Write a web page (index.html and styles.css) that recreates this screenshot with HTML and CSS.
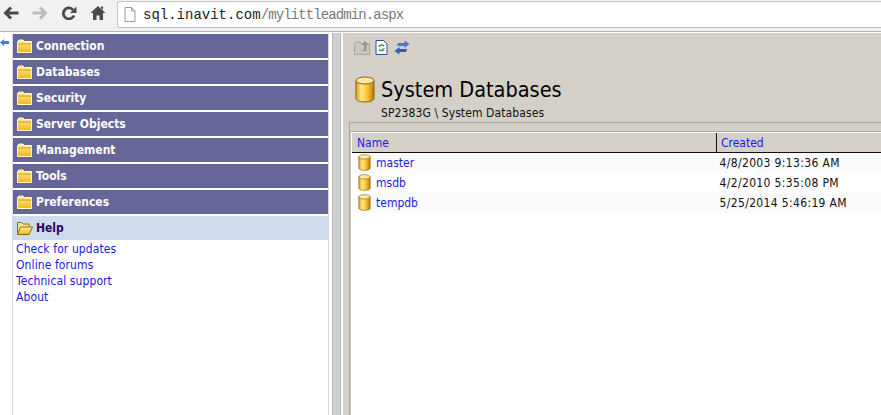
FILE: index.html
```html
<!DOCTYPE html>
<html lang="en">
<head>
    <meta charset="UTF-8">
    <title>myLittleAdmin</title>
    <link rel="stylesheet" href="styles.css">
</head>
<body>
    <svg width="0" height="0" class="defs">
        <defs>
            <linearGradient id="dbfill" x1="0" x2="1" y1="0" y2="0">
                <stop offset="0" stop-color="#e0a010"/>
                <stop offset="0.3" stop-color="#ffe88a"/>
                <stop offset="0.65" stop-color="#f8c030"/>
                <stop offset="1" stop-color="#b87a08"/>
            </linearGradient>
            <linearGradient id="folderfill" x1="0" x2="0" y1="0" y2="1">
                <stop offset="0" stop-color="#fff3a0"/>
                <stop offset="1" stop-color="#f4b414"/>
            </linearGradient>
            <symbol id="db" viewBox="0 0 20 27">
                <path d="M1 4.500v18c0 2 4 3.500 9 3.500s9-1.500 9-3.500v-18z" fill="url(#dbfill)" stroke="#8a6414"/>
                <ellipse cx="10" cy="4.500" rx="9" ry="3.500" fill="#ffe9a0" stroke="#8a6414"/>
            </symbol>
            <symbol id="folder" viewBox="0 0 15 14">
                <path d="M.5 2.500L2 1h4l1.500 1.500h7v11H.5z" fill="url(#folderfill)" stroke="#fff8d0"/>
                <path d="M1 5h13" stroke="#c89a10"/>
            </symbol>
            <symbol id="folderopen" viewBox="0 0 17 14">
                <path d="M1.500 12.500v-11h4l1.500 1.500h6v2.500" fill="#ffe68a" stroke="#8a6a14"/>
                <path d="M1.500 13.500h11.500l3.500-7.500H4.500z" fill="url(#folderfill)" stroke="#8a6a14"/>
            </symbol>
        </defs>
    </svg>

    <header class="toolbar">
        <div class="nav">
            <svg class="nav-icon" viewBox="0 0 16 14"><path d="M15.500 7H3.500M8 1.500L2.500 7 8 12.500" fill="none" stroke="#4a4a4a" stroke-width="3"/></svg>
            <svg class="nav-icon" viewBox="0 0 16 14"><path d="M.5 7h12M8 1.500L13.500 7 8 12.500" fill="none" stroke="#bcbcbc" stroke-width="3"/></svg>
            <svg class="nav-icon" viewBox="0 0 16 14"><path d="M12.200 4A5.500 5.500 0 1 0 13 9.500" fill="none" stroke="#4a4a4a" stroke-width="2.800"/><path d="M15.500 .5v6.500H9z" fill="#4a4a4a"/></svg>
            <svg class="nav-icon" viewBox="0 0 16 14"><path d="M8 0L.5 7H3v7h3.500V9.500h3V14H13V7h2.500zM11 .5h2v3.500l-2-2z" fill="#4a4a4a"/></svg>
        </div>
        <div class="address">
            <svg class="page-icon" viewBox="0 0 12 15"><path d="M1 .5h6.500L11 4v10.500H1z" fill="#fff" stroke="#999"/><path d="M7.500.5V4H11" fill="none" stroke="#999"/></svg>
            <span class="host">sql.inavit.com</span><span class="path">/mylittleadmin.aspx</span>
        </div>
    </header>

    <div class="app">
        <aside class="sidebar">
            <svg class="collapse" viewBox="0 0 9 7"><path d="M0 3.500L4 0v2h5v3H4v2z" fill="#3f7fd8"/></svg>
            <nav class="menu">
                <div class="menu-item"><svg class="folder"><use href="#folder"/></svg>Connection</div>
                <div class="menu-item"><svg class="folder"><use href="#folder"/></svg>Databases</div>
                <div class="menu-item"><svg class="folder"><use href="#folder"/></svg>Security</div>
                <div class="menu-item"><svg class="folder"><use href="#folder"/></svg>Server Objects</div>
                <div class="menu-item"><svg class="folder"><use href="#folder"/></svg>Management</div>
                <div class="menu-item"><svg class="folder"><use href="#folder"/></svg>Tools</div>
                <div class="menu-item"><svg class="folder"><use href="#folder"/></svg>Preferences</div>
                <div class="menu-item active"><svg class="folder-open"><use href="#folderopen"/></svg>Help</div>
                <ul class="submenu">
                    <li><a href="#">Check for updates</a></li>
                    <li><a href="#">Online forums</a></li>
                    <li><a href="#">Technical support</a></li>
                    <li><a href="#">About</a></li>
                </ul>
            </nav>
        </aside>
        <div class="splitter"><div class="splitter-bar"></div></div>
        <main class="content">
            <div class="head">
                <div class="tools">
                    <svg class="tool tool-up" viewBox="0 0 16 15"><path d="M.5 3.500L2 2h4l1 1.500h8.500v11H.5z" fill="#c8c5be" stroke="#a8a6a0"/><path d="M10.500 1l4 4h-2v6H7c2 0 3-2 3-3V5H7.500z" fill="#98968f"/></svg>
                    <svg class="tool tool-page" viewBox="0 0 13 15"><path d="M1 .5h7.500L12 4v10.500H1z" fill="#fff" stroke="#30508c"/><path d="M9 6A3 3 0 0 0 3.800 7M4 9.500A3 3 0 0 0 9.200 8.500" fill="none" stroke="#2e9a2e" stroke-width="1.400"/></svg>
                    <svg class="tool tool-swap" viewBox="0 0 16 15"><path d="M4 3h6.500V.5L15.500 4l-5 4V6H3z" fill="#3f78e0"/><path d="M12 12H5.500v2.500L.5 11l5-4v2H13z" fill="#2f5cc0"/></svg>
                </div>
                <div class="title-row">
                    <svg class="title-icon"><use href="#db"/></svg>
                    <h1>System Databases</h1>
                </div>
                <div class="crumb">SP2383G \ System Databases</div>
            </div>
            <div class="pane">
                <div class="table-wrap">
                    <table class="grid">
                        <thead>
                            <tr><th class="col-name"><a href="#">Name</a></th><th class="col-created"><a href="#">Created</a></th></tr>
                        </thead>
                        <tbody>
                            <tr class="odd"><td><span class="db-cell"><svg class="db-icon"><use href="#db"/></svg><a href="#">master</a></span></td><td class="date">4/8/2003 9:13:36 AM</td></tr>
                            <tr><td><span class="db-cell"><svg class="db-icon"><use href="#db"/></svg><a href="#">msdb</a></span></td><td class="date">4/2/2010 5:35:08 PM</td></tr>
                            <tr class="odd"><td><span class="db-cell"><svg class="db-icon"><use href="#db"/></svg><a href="#">tempdb</a></span></td><td class="date">5/25/2014 5:46:19 AM</td></tr>
                        </tbody>
                    </table>
                </div>
            </div>
        </main>
    </div>
</body>
</html>
```

FILE: styles.css
```css
html, body {
    margin: 0;
    height: 100%;
    overflow: hidden;
}
body {
    font-family: "DejaVu Sans Condensed", "DejaVu Sans", sans-serif;
    font-size: 12px;
    background-color: #fff;
    display: flex;
    flex-direction: column;
}
a {
    color: #1a1ae0;
    text-decoration: none;
}
.defs {
    position: absolute;
}

/* browser bar */
.toolbar {
    height: 31px;
    flex: none;
    display: flex;
    background-color: #f1f1f1;
    border-bottom: 1px solid #b4b4b4;
}
.nav {
    width: 117px;
    flex: none;
    display: flex;
    gap: 13px;
    padding: 6px 0 0 3px;
    box-sizing: border-box;
}
.nav-icon {
    width: 16px;
    height: 14px;
}
.address {
    flex: 1;
    height: 25px;
    margin-top: 1px;
    display: flex;
    align-items: center;
    background-color: #fff;
    border: 1px solid #c4c4c4;
    border-right: none;
    border-radius: 3px 0 0 3px;
    font-family: "Liberation Mono", monospace;
    font-size: 14px;
    padding-left: 6px;
}
.page-icon {
    width: 12px;
    height: 15px;
    margin-right: 7px;
}
.host {
    color: #222;
}
.path {
    color: #777;
    letter-spacing: -0.9px;
}

/* left menu */
.app {
    flex: 1;
    display: flex;
    min-height: 0;
}
.sidebar {
    width: 328px;
    flex: none;
    display: flex;
    padding-top: 2px;
    box-sizing: border-box;
}
.collapse {
    width: 9px;
    height: 7px;
    margin-top: 5px;
    margin-right: 3px;
    flex: none;
}
.menu {
    flex: 1;
    border-left: 1px solid #d8d8e4;
}
.menu-item {
    height: 24px;
    margin-bottom: 2px;
    display: flex;
    align-items: center;
    gap: 4px;
    padding-left: 4px;
    background-color: #666699;
    color: #fff;
    font-size: 12px;
    font-weight: bold;
}
.menu-item.active {
    background-color: #ccdcec;
    color: #330066;
}
.folder {
    width: 15px;
    height: 14px;
}
.folder-open {
    width: 17px;
    height: 14px;
    margin-left: -1px;
    margin-right: -1px;
}
.submenu {
    list-style: none;
    margin: -1px 0 0;
    padding: 0 0 0 3px;
    line-height: 16px;
    letter-spacing: 0.1px;
}

/* splitter */
.splitter {
    width: 15px;
    flex: none;
    padding-left: 3px;
    box-sizing: border-box;
    margin-top: 1px;
    border-left: 1px solid #d8d8d8;
}
.splitter-bar {
    width: 9px;
    height: 100%;
    background-color: #d0d0d0;
    border-left: 1px solid #b8b8b8;
    border-right: 1px solid #b8b8b8;
    box-sizing: border-box;
}

/* right side */
.content {
    flex: 1;
    min-width: 0;
    margin-top: 1px;
    background-color: #d4d0c8;
    display: flex;
    flex-direction: column;
}
.head {
    height: 89px;
    flex: none;
    padding-top: 7px;
    box-sizing: border-box;
}
.tools {
    display: flex;
    height: 15px;
    padding-left: 11px;
}
.tool {
    height: 15px;
}
.tool-up {
    width: 16px;
}
.tool-page {
    width: 13px;
    margin-left: 5px;
}
.tool-swap {
    width: 16px;
    margin-left: 6px;
}
.title-row {
    display: flex;
    align-items: center;
    gap: 6px;
    margin-top: 20px;
    padding-left: 12px;
    height: 28px;
}
.title-icon {
    width: 20px;
    height: 27px;
}
h1 {
    margin: 0;
    font-size: 21.5px;
    font-weight: normal;
    color: #000;
}
.crumb {
    margin-top: 3px;
    padding-left: 38px;
    letter-spacing: 0.1px;
    color: #111;
}
.pane {
    flex: 1;
    display: flex;
    min-height: 0;
    margin-left: 6px;
    padding-top: 8px;
    border-left: 1px solid #a8a6a2;
    border-top: 1px solid #a8a6a2;
}
.table-wrap {
    flex: 1;
    min-width: 0;
    background-color: #fff;
    border-top: 1px solid #a8a6a2;
    border-left: 1px solid #c8c8c8;
    padding: 1px 0 0 1px;
}
.grid {
    border-collapse: collapse;
    width: 100%;
    table-layout: fixed;
}
.grid th {
    height: 18px;
    padding: 1px 0 0 5px;
    text-align: left;
    font-weight: normal;
    background-color: #d4d0c8;
    border-bottom: 1px solid #111;
}
.grid th.col-created {
    padding-left: 4px;
}
.col-name {
    width: 359px;
    border-right: 1px solid #111;
}
.grid td {
    height: 19px;
    padding: 0 0 1px 6px;
    color: #111;
}
.grid td.date {
    padding-left: 3px;
    letter-spacing: 0.35px;
}
.grid tr.odd td {
    background-color: #fafafa;
}
.db-cell {
    display: flex;
    align-items: center;
    gap: 5px;
}
.db-icon {
    width: 13px;
    height: 17px;
}
```
